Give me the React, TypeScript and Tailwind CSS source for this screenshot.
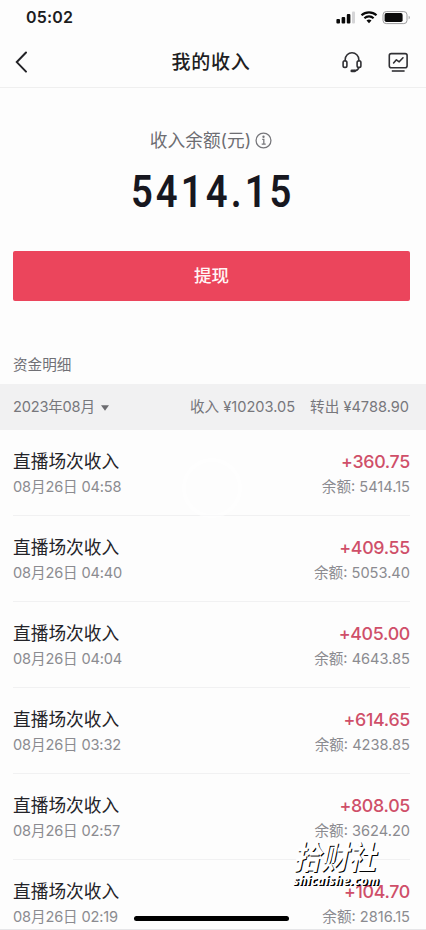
import React from 'react';

interface IncomeRecord {
  time: string;
  amount: string;
  balance: string;
}

const records: IncomeRecord[] = [
  { time: '08月26日 04:58', amount: '+360.75', balance: '5414.15' },
  { time: '08月26日 04:40', amount: '+409.55', balance: '5053.40' },
  { time: '08月26日 04:04', amount: '+405.00', balance: '4643.85' },
  { time: '08月26日 03:32', amount: '+614.65', balance: '4238.85' },
  { time: '08月26日 02:57', amount: '+808.05', balance: '3624.20' },
  { time: '08月26日 02:19', amount: '+104.70', balance: '2816.15' },
];

function StatusBar() {
  return (
    <div className="flex h-[34px] items-center justify-between pl-[26px] pr-[15px]">
      <span className="text-[16px] font-semibold leading-none tracking-[0.2px] text-[#1c1c1e]">05:02</span>
      <svg className="h-4 w-[75px]" viewBox="0 0 75 16">
        <g fill="#0a0a0a">
          <rect x="0.4" y="10" width="3.6" height="4.4" rx="1" />
          <rect x="5.6" y="8" width="3.6" height="6.4" rx="1" />
          <rect x="10.8" y="5" width="3.6" height="9.4" rx="1" />
          <rect x="16" y="2.5" width="3" height="11.9" rx="1" fill="#d5d5d7" />
          <path d="M33 14.2l-2.5-2.6a3.7 3.7 0 0 1 5 0z" />
        </g>
        <path d="M25.5 6.3a11 11 0 0 1 15 0M28.4 9.2a6.8 6.8 0 0 1 9.2 0" fill="none" stroke="#0a0a0a" strokeWidth="2.2" />
        <rect x="47" y="2.6" width="24" height="12" rx="3.2" fill="none" stroke="#9b9b9d" />
        <rect x="48.6" y="4.1" width="18" height="9" rx="1.8" fill="#0a0a0a" />
        <path d="M72.7 6.8c1.5.6 1.5 3 0 3.6z" fill="#9b9b9d" />
      </svg>
    </div>
  );
}

function NavBar() {
  return (
    <header className="flex h-[54px] items-center justify-between border-b border-[#efefef] pl-[14px] pr-[16px]">
      <svg className="h-6 w-[70px]" viewBox="0 0 70 24" fill="none" stroke="#222226" strokeWidth="2" strokeLinecap="round">
        <path d="M12 3.5L2.8 13.1L12 22.6" />
      </svg>
      <h1 className="pt-[5px] text-[19px] font-medium leading-6 tracking-[0.7px] text-[#1e1e22]">我的收入</h1>
      <div className="flex w-[72px] items-center justify-between pl-[2px] pt-[2px]">
        <svg className="h-6 w-6" viewBox="0 0 24 24" fill="none" stroke="#303034" strokeWidth="1.6" strokeLinecap="round">
          <path d="M5.2 11V9.5a6.8 6.8 0 0 1 13.6 0V11" />
          <rect x="3.1" y="10.8" width="3.8" height="6.6" rx="1.7" />
          <rect x="17.1" y="10.8" width="3.8" height="6.6" rx="1.7" />
          <path d="M18.7 17.8c-.5 2-2.2 3-5 3" />
          <path d="M11.8 20.9h2.8" strokeWidth="2.7" />
        </svg>
        <svg className="h-6 w-6" viewBox="0 0 24 24" fill="none" stroke="#303034" strokeWidth="1.6" strokeLinejoin="round">
          <rect x="3.3" y="3.6" width="17.8" height="14.2" rx="2" />
          <path d="M7.6 13l2.8-3.2 2.8 2 3.8-4" strokeLinecap="round" />
          <path d="M5.8 21h12.8" />
        </svg>
      </div>
    </header>
  );
}

export default function App() {
  return (
    <div className="relative h-[930px] w-[426px] overflow-hidden bg-[#fdfdfd] font-['Inter','Noto_Sans_CJK_SC',sans-serif]">
      <StatusBar />
      <NavBar />

      {/* 余额 */}
      <section className="flex flex-col items-center pr-[4px] pt-[41px]">
        <div className="flex items-center gap-[4px] text-[17.7px] leading-6 text-[#6d6d72]">
          <span>收入余额(元)</span>
          <svg className="mb-[2px] h-[17px] w-[17px]" viewBox="0 0 16 16" fill="none" stroke="#77777b" strokeWidth="1.2">
            <circle cx="8" cy="8" r="7" />
            <path d="M6.8 7h1.5v4.3M6.3 11.4h3.8" />
            <circle cx="8" cy="4.5" r=".5" fill="#77777b" />
          </svg>
        </div>
        <div className="mt-[16px] h-12 origin-center scale-x-[0.88] whitespace-nowrap pl-[4px] font-[Roboto] text-[43.5px] font-semibold leading-12 tracking-[3.5px] text-[#17171f]">
          5414.15
        </div>
      </section>

      <div className="mt-[34px] pl-[13px] pr-[16px]">
        <button className="h-[50px] w-full rounded-[2px] bg-[#eb455c] pt-px text-[17.5px] font-medium text-[#fff5f6]">提现</button>
      </div>

      <h2 className="mt-[54px] pl-[13px] text-[14.6px] leading-5 text-[#707075]">资金明细</h2>

      <div className="mt-[9px] flex h-[46px] items-center justify-between bg-[#f1f1f2] pl-[13px] pr-[17px] pt-[2px] text-[14.6px] text-[#77777c]">
        <div className="flex items-center gap-[6px]">
          <span className="tracking-[-0.2px]">2023年08月</span>
          <svg className="h-[6px] w-2" viewBox="0 0 8 6" fill="#6c6c70">
            <path d="M0 .3h8L4 5.7z" />
          </svg>
        </div>
        <div className="flex gap-[15px]">
          <span>收入 ¥10203.05</span>
          <span>转出 ¥4788.90</span>
        </div>
      </div>

      {/* 收入明细列表 */}
      <ul className="pl-[13px] pr-[16px]">
        {records.map((r) => (
          <li key={r.time} className="flex h-[86px] justify-between border-b border-[#f1f1f2] pt-[19px]">
            <div>
              <div className="text-[17.7px] leading-[26px] text-[#242429]">直播场次收入</div>
              <div className="text-[14.6px] leading-[25px] tracking-[-0.15px] text-[#8b8b90]">{r.time}</div>
            </div>
            <div className="text-right">
              <div className="text-[17.8px] font-medium leading-[26px] tracking-[-0.3px] text-[#cf4f69]">{r.amount}</div>
              <div className="text-[14.6px] leading-[25px] text-[#8b8b90]">余额: {r.balance}</div>
            </div>
          </li>
        ))}
      </ul>

      <div className="absolute left-[182px] top-[458px] h-[60px] w-[60px] rounded-full border-4 border-white/50" />

      {/* 水印 */}
      <div className="absolute left-[293px] top-[838px] whitespace-nowrap font-bold italic text-white [text-shadow:1px_1px_0_#000]">
        <div className="origin-top-left scale-y-[1.18] text-[27.5px] leading-[32px]">拾财社</div>
        <div className="mt-[4px] font-['Noto_Sans'] text-[12px] leading-[14px] tracking-[0.5px] [text-shadow:1px_1px_0_#000,1.5px_1px_0_#000]">
          shicaishe.com
        </div>
      </div>

      <div className="absolute bottom-[9px] left-[134px] h-[5px] w-[155px] rounded-full bg-black" />
      <div className="absolute bottom-0 left-0 h-px w-full bg-[#e6e6e8]" />
    </div>
  );
}
